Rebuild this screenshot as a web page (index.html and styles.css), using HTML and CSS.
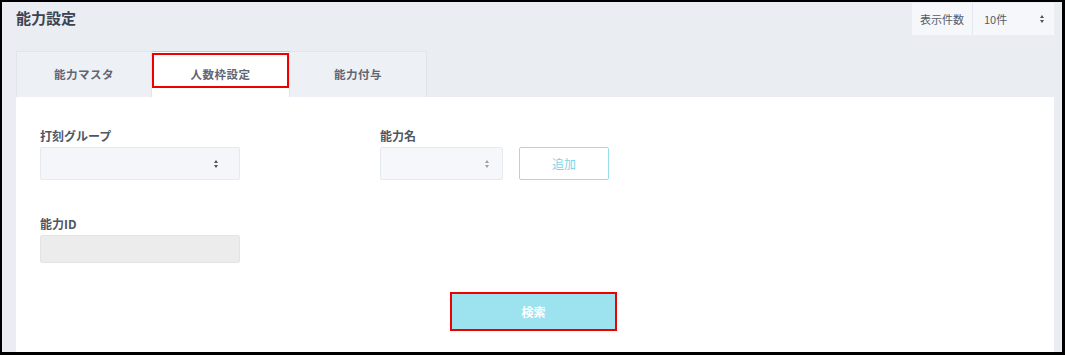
FILE: index.html
```html
<!DOCTYPE html>
<html lang="ja">
<head>
    <meta charset="UTF-8">
    <meta name="viewport" content="width=device-width, initial-scale=1.0">
    <title>能力設定</title>
    <link rel="stylesheet" href="styles.css">
</head>
<body>
    <div class="frame">
        <div class="page-header">
            <h1>能力設定</h1>
            <div class="per-page">
                <span class="per-page-label">表示件数</span>
                <span class="per-page-value">10件<span class="arrows"></span></span>
            </div>
        </div>

        <div class="tabs">
            <div class="tab">能力マスタ</div>
            <div class="tab active">人数枠設定<span class="mark"></span></div>
            <div class="tab">能力付与</div>
        </div>

        <div class="panel">
            <div class="row">
                <div class="field field-group">
                    <label>打刻グループ</label>
                    <div class="select wide"><span class="arrows"></span></div>
                </div>
                <div class="field field-name">
                    <label>能力名</label>
                    <div class="inline">
                        <div class="select narrow"><span class="arrows light"></span></div>
                        <button class="btn-add">追加</button>
                    </div>
                </div>
            </div>

            <div class="field field-id">
                <label>能力ID</label>
                <div class="input-disabled"></div>
            </div>

            <div class="actions">
                <div class="search-wrap">
                    <button class="btn-search">検索</button>
                </div>
            </div>
        </div>
    </div>
</body>
</html>
```

FILE: styles.css
```css
* {
    margin: 0;
    padding: 0;
    box-sizing: border-box;
}

body {
    background: #000;
    font-family: "Noto Sans CJK JP", "Noto Sans", sans-serif;
    color: #4a5260;
}

.frame {
    width: 1060px;
    height: 350px;
    margin: 2px 3px 3px 2px;
    background: #eaedf1;
    padding: 0 8px 0 14px;
    overflow: hidden;
}

.page-header {
    height: 49px;
    display: flex;
    justify-content: space-between;
    align-items: flex-start;
}

.page-header h1 {
    font-size: 15px;
    font-weight: 700;
    color: #3b4453;
    margin-top: 6px;
    line-height: 20px;
}

.per-page {
    display: flex;
    margin-top: 1px;
    height: 32px;
    background: #f5f7fb;
    font-size: 11px;
    color: #555c66;
}

.per-page-label {
    width: 61px;
    display: flex;
    align-items: center;
    justify-content: center;
    border-right: 1px solid #e6e9ee;
}

.per-page-value {
    width: 81px;
    display: flex;
    align-items: center;
    justify-content: space-between;
    padding: 0 9px 0 11px;
}

.arrows {
    display: inline-block;
    width: 5px;
    height: 8px;
    position: relative;
}

.arrows::before,
.arrows::after {
    content: "";
    position: absolute;
    left: 0;
    border-left: 2.5px solid transparent;
    border-right: 2.5px solid transparent;
}

.arrows::before {
    top: 0;
    border-bottom: 3px solid #4a5260;
}

.arrows::after {
    bottom: 0;
    border-top: 3px solid #4a5260;
}

.arrows.light::before {
    border-bottom-color: #9aa0a8;
}

.arrows.light::after {
    border-top-color: #9aa0a8;
}

.tabs {
    display: flex;
    height: 46px;
}

.tab {
    position: relative;
    width: 137px;
    display: flex;
    align-items: center;
    justify-content: center;
    background: #edf0f4;
    border: 1px solid #e1e5ea;
    border-bottom: none;
    font-size: 11.5px;
    font-weight: 700;
    letter-spacing: 0.5px;
    color: #5f6672;
    padding-bottom: 2px;
}

.tab:first-child {
    width: 136px;
}

.tab + .tab {
    border-left: none;
}

.tab.active {
    background: #fff;
    border-top: 1px solid #f6b3b3;
    width: 138px;
}

.tab .mark {
    position: absolute;
    top: 1px;
    left: 0;
    width: 137px;
    height: 35px;
    border: 2px solid #ee0000;
}

.panel {
    background: #fff;
    height: 255px;
    padding: 31px 24px 0;
}

.row {
    display: flex;
}

.field label {
    display: block;
    font-size: 12px;
    font-weight: 700;
    color: #4e5663;
    line-height: 16px;
    margin-bottom: 3px;
}

.field-name {
    margin-left: 140px;
}

.select {
    height: 33px;
    background: #f4f6fa;
    border: 1px solid #e6e9ee;
    border-radius: 2px;
    display: flex;
    align-items: center;
    justify-content: flex-end;
}

.select.wide {
    width: 200px;
    padding-right: 20px;
}

.select.narrow {
    width: 123px;
    padding-right: 12px;
    background: #f6f7fa;
}

.inline {
    display: flex;
    gap: 16px;
}

.btn-add {
    width: 90px;
    height: 33px;
    background: #fff;
    border: 1px solid #96dfeb;
    border-radius: 2px;
    color: #7fd4e6;
    font-family: inherit;
    font-size: 12px;
}

.field-id {
    margin-top: 36px;
}

.input-disabled {
    width: 200px;
    height: 28px;
    background: #ececec;
    border: 1px solid #e4e4e4;
    border-radius: 2px;
}

.actions {
    display: flex;
    justify-content: center;
    margin-top: 29px;
    padding-right: 3px;
}

.search-wrap {
    border: 2px solid #ee0000;
    width: 167px;
    height: 39px;
}

.btn-search {
    width: 100%;
    height: 100%;
    background: #9de3ef;
    border: none;
    color: #fff;
    font-family: inherit;
    font-weight: 700;
    font-size: 12px;
}
```
